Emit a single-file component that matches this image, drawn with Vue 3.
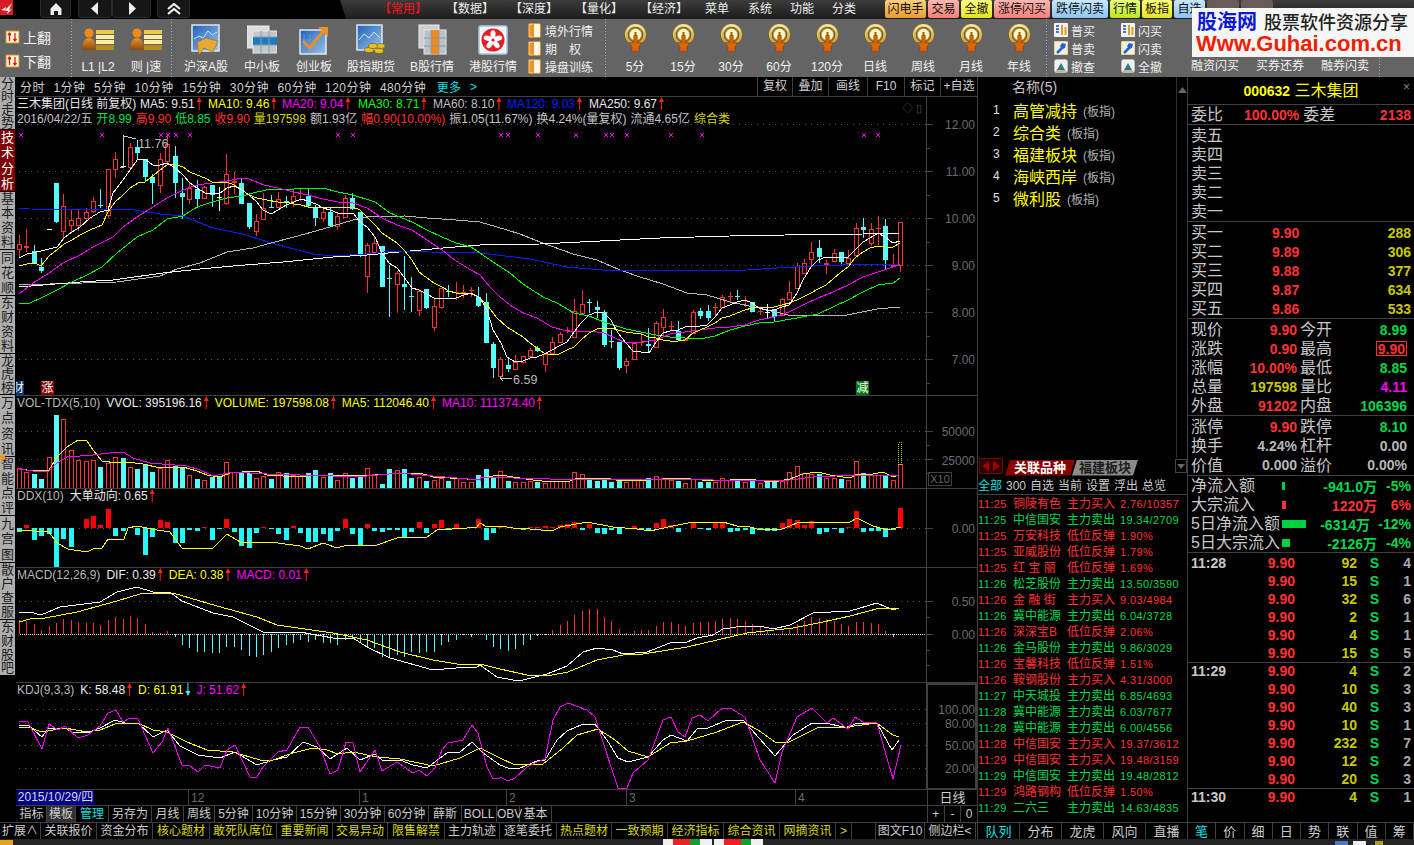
<template>
  <div class="terminal">
    <svg class="sprite" width="0" height="0">
      <defs>
        <linearGradient id="tile" x1="0" y1="0" x2="1" y2="1"><stop offset="0" stop-color="#1f5fb8" /><stop offset="1" stop-color="#9cc4ec" /></linearGradient>
        <linearGradient id="gold" x1="0" y1="0" x2="0" y2="1"><stop offset="0" stop-color="#ffe680" /><stop offset="1" stop-color="#d89a10" /></linearGradient>
        <linearGradient id="pers" x1="0" y1="0" x2="0" y2="1"><stop offset="0" stop-color="#f09020" /><stop offset="1" stop-color="#8a4a10" /></linearGradient>
      </defs>
      <symbol id="ic-page" viewBox="0 0 14 14">
        <rect x="0.500" y="1" width="13" height="12" fill="#fff4d0" stroke="#c89030" />
        <path d="M4 3v8M2.500 5 4 3l1.500 2M9.500 11V3M8 9l1.500 2L11 9" fill="none" stroke="#d02010" stroke-width="1.300" />
      </symbol>
      <symbol id="ic-user" viewBox="0 0 32 24">
        <circle cx="7" cy="6" r="4.500" fill="#f08a1c" />
        <path d="M0 23c0-8 3-12 7-12s7 4 7 12z" fill="url(#pers)" />
        <rect x="14" y="3" width="18" height="4" fill="#e8c850" /><rect x="14" y="8" width="18" height="4" fill="#fff0a0" /><rect x="14" y="13" width="18" height="4" fill="#fff0a0" /><rect x="14" y="18" width="18" height="5" fill="#b88a20" />
      </symbol>
      <symbol id="ic-a" viewBox="0 0 30 32">
        <rect x="1" y="1" width="27" height="26" fill="url(#tile)" stroke="#dfe8f0" stroke-width="1.500" />
        <path d="M3 15l5-3 4 2 5-7 4 4 5-3" fill="none" stroke="#cfe6ff" />
        <path d="M6 18l9-4 12 3-5 11-9-4-5 7z" fill="#e8a838" stroke="#8a5a10" stroke-width="0.500" />
      </symbol>
      <symbol id="ic-mid" viewBox="0 0 30 32">
        <rect x="0" y="2" width="22" height="22" fill="#d8dde2" stroke="#f0f0f0" />
        <rect x="6" y="7" width="24" height="22" fill="#c0c8cf" stroke="#e8e8e8" />
        <rect x="6" y="13" width="24" height="8" fill="#1c7ac0" />
        <path d="M14 7v22M22 7v22M6 13h24M6 21h24" stroke="#8e99a2" fill="none" />
      </symbol>
      <symbol id="ic-cy" viewBox="0 0 30 32">
        <rect x="1" y="6" width="26" height="24" fill="url(#tile)" stroke="#dfe8f0" stroke-width="1.500" />
        <path d="M5 10v17M11 10v17M17 10v17M23 10v17M3 16h22M3 22h22" stroke="#6ea4dc" fill="none" stroke-width="0.600" />
        <path d="M4 17l7 7L25 6" fill="none" stroke="#f09020" stroke-width="3" />
        <path d="M19 3h10v10z" fill="#f09020" />
      </symbol>
      <symbol id="ic-fut" viewBox="0 0 30 32">
        <rect x="1" y="1" width="25" height="25" fill="url(#tile)" stroke="#dfe8f0" stroke-width="1.500" />
        <path d="M3 16l5-6 5 4 5-6 6 6" fill="none" stroke="#d0e8ff" />
        <g fill="#e8c020" stroke="#6a5010" stroke-width="0.600">
          <ellipse cx="13" cy="26" rx="4.500" ry="2.500" /><ellipse cx="23" cy="27" rx="4.500" ry="2.500" /><ellipse cx="17" cy="22" rx="4.500" ry="2.500" /><ellipse cx="25" cy="22" rx="4" ry="2.500" />
        </g>
      </symbol>
      <symbol id="ic-b" viewBox="0 0 30 32">
        <rect x="2" y="1" width="20" height="23" fill="#c8ced4" stroke="#eee" />
        <rect x="7" y="6" width="22" height="24" fill="#b8c0c8" stroke="#e8e8e8" />
        <rect x="14" y="6" width="8" height="24" fill="#f08a1c" />
        <path d="M14 6v24M22 6v24M7 14h22M7 22h22" stroke="#8e99a2" fill="none" />
      </symbol>
      <symbol id="ic-hk" viewBox="0 0 30 30">
        <rect x="1" y="1" width="28" height="28" rx="2" fill="#f4f8fc" stroke="#a8c8e0" stroke-width="1.500" />
        <circle cx="15" cy="15" r="11.500" fill="#e81c24" />
        <g fill="#fff">
          <ellipse cx="15" cy="9.500" rx="2.600" ry="4.200" /><ellipse cx="15" cy="9.500" rx="2.600" ry="4.200" transform="rotate(72 15 15)" /><ellipse cx="15" cy="9.500" rx="2.600" ry="4.200" transform="rotate(144 15 15)" /><ellipse cx="15" cy="9.500" rx="2.600" ry="4.200" transform="rotate(216 15 15)" /><ellipse cx="15" cy="9.500" rx="2.600" ry="4.200" transform="rotate(288 15 15)" />
        </g>
      </symbol>
      <symbol id="ic-note" viewBox="0 0 14 16">
        <rect x="0.500" y="0.500" width="13" height="15" rx="1.500" fill="#fff8e0" stroke="#c89030" />
        <rect x="1.500" y="1.500" width="4" height="13" fill="#f09020" />
        <path d="M3.500 4h.1M3.500 8h.1M3.500 12h.1" stroke="#fff" stroke-width="1.500" />
        <path d="M6 1v14" stroke="#c89030" />
      </symbol>
      <symbol id="ic-gold" viewBox="0 0 26 34">
        <circle cx="13" cy="12" r="10.500" fill="none" stroke="url(#gold)" stroke-width="3" />
        <circle cx="13" cy="12" r="7" fill="#fff6c0" stroke="#c89020" />
        <path d="M13 6.500v.1M13 9v7" stroke="#8a5a10" stroke-width="2.200" />
        <path d="M11 13h4v8h5l-3 5v5H9v-5l-3-5h5z" fill="#d8660c" stroke="#8a3a08" stroke-width="0.600" />
      </symbol>
      <symbol id="ic-buy" viewBox="0 0 14 14">
        <rect x="0" y="0" width="14" height="14" rx="1" fill="#f4f4f4" />
        <path d="M2 3h3M2 6h3M2 9h3" stroke="#1840c0" stroke-width="1.500" />
        <path d="M7 2h2v10H7zM10.500 4h2v8h-2z" fill="#e89a20" />
      </symbol>
      <symbol id="ic-sell" viewBox="0 0 14 14">
        <rect x="0" y="0" width="14" height="14" rx="1" fill="#f4f0d8" stroke="#c89030" stroke-width="0.600" />
        <path d="M3 12l6-6" stroke="#2060e0" stroke-width="2.500" />
        <path d="M8 2l4 1-1 4-3 1-2-3z" fill="#2060e0" />
      </symbol>
      <symbol id="ic-cancel" viewBox="0 0 14 14">
        <rect x="0.500" y="0.500" width="13" height="13" rx="2" fill="#f0f0f0" stroke="#bbb" />
        <path d="M3 11l4-7 4 7z" fill="#2a7a8a" />
        <path d="M2 12h10" stroke="#a08030" />
      </symbol>
    </svg>

    <header class="topbar">
      <div class="top-left">
        <svg class="logo" viewBox="0 0 13 15"><rect width="13" height="15" fill="#d81c24" /><path d="M1 10l5-3-1 3 7-7-3 7 3-1-5 5 1-3z" fill="#f4f4f4" /></svg>
        <div class="nav-btn home"><svg width="12" height="12" viewBox="0 0 12 12"><path d="M6 0l5.500 5.500V12H8V8H4v4H.500V5.500z" fill="#eee" /></svg></div>
        <div class="nav-btn back"><svg width="8" height="13" viewBox="0 0 8 13"><path d="M7 0v13L0 6.500z" fill="#eee" /></svg></div>
        <div class="nav-btn fwd"><svg width="8" height="13" viewBox="0 0 8 13"><path d="M1 0v13l7-6.500z" fill="#eee" /></svg></div>
        <div class="nav-btn top-btn"><svg width="14" height="12" viewBox="0 0 14 12"><path d="M1 6l6-5 6 5M1 11l6-5 6 5" fill="none" stroke="#eee" stroke-width="2.200" /></svg></div>
      </div>
      <nav class="menu">
        <span v-for="m in menus" :key="m.label" class="menu-item" :class="{ on: m.on }" :style="{ left: m.x + 'px' }">{{ m.label }}</span>
      </nav>
      <div class="quick">
        <span v-for="q in quicks" :key="q.label" class="quick-btn" :class="q.cls" :style="{ width: q.w + 'px' }">{{ q.label }}</span>
        <span class="quick-btn q-fade"></span><span class="quick-btn q-fade"></span>
      </div>
    </header>

    <section class="toolbar">
      <div class="tb-group g-page">
        <div class="page-item"><svg width="15" height="14"><use href="#ic-page" /></svg>上翻</div>
        <div class="page-item"><svg width="15" height="14"><use href="#ic-page" /></svg>下翻</div>
      </div>
      <div class="tb-group g-user">
        <div v-for="u in ['L1 |L2', '则 |速']" :key="u" class="tool"><svg class="user-ic" width="32" height="24"><use href="#ic-user" /></svg><span>{{ u }}</span></div>
      </div>
      <div class="tb-group g-mark">
        <div v-for="t in marketTools" :key="t.label" class="tool" :style="{ width: t.w + 'px' }">
          <svg class="mark-ic" width="30" height="32"><use :href="'#' + t.icon" /></svg><span>{{ t.label }}</span>
        </div>
        <div class="tool-list">
          <div v-for="n in ['境外行情', '期　权', '操盘训练']" :key="n"><svg width="13" height="15"><use href="#ic-note" /></svg>{{ n }}</div>
        </div>
      </div>
      <div class="tb-group g-per">
        <div v-for="p in periodTools" :key="p" class="tool per"><svg class="gold-ic" width="23" height="30"><use href="#ic-gold" /></svg><span>{{ p }}</span></div>
      </div>
      <div class="tb-group g-trade">
        <div v-for="t in tradeTools" :key="t.label" class="trade-item"><svg width="14" height="14"><use :href="'#' + t.icon" /></svg>{{ t.label }}</div>
      </div>
      <div class="tb-group g-margin">
        <span v-for="m in ['融资闪买', '买券还券', '融券闪卖']" :key="m">{{ m }}</span>
      </div>
    </section>
    <div class="watermark">
      <div class="wm-top"><b>股海网</b><span>股票软件资源分享</span></div>
      <div class="wm-url">Www.Guhai.com.cn</div>
    </div>

    <div class="body">
      <div class="left-wrap">
        <div class="left-top">
          <aside class="side">
            <div v-for="s in sideTabs" :key="s.label" class="side-tab" :class="{ on: s.on }" :style="{ height: s.h + 'px', lineHeight: (s.h - 1) / s.label.length + 'px' }">
              <span v-for="ch in s.label" :key="ch">{{ ch }}</span>
            </div>
            <i class="side-dot"></i>
          </aside>

          <main class="center">
            <div class="periods">
              <span v-for="p in periods" :key="p">{{ p }}</span>
              <span class="more">更多</span><span class="more more-arrow">&gt;</span>
              <div class="period-actions"><span v-for="a in periodActions" :key="a[0]" :style="{ width: a[1] + 'px' }">{{ a[0] }}</span></div>
            </div>

            <div class="chart">
              <svg class="canvas" width="962" height="692" viewBox="16 97 962 692" shape-rendering="crispEdges">
                <g fill="none" stroke="#585858" stroke-dasharray="1 5">
                  <line v-for="y in gridY" :key="y" x1="19" :y1="y + 0.5" x2="926" :y2="y + 0.5" />
                </g>
                <line x1="20" y1="634.500" x2="926" y2="634.500" stroke="#e0e0e0" stroke-dasharray="1 1" />
                <g stroke="#444">
                  <line x1="926.500" y1="97" x2="926.500" y2="789" />
                  <line v-for="t in axisTicks" :key="t.y" :x1="927" :y1="t.y + 0.5" :x2="t.major ? 933 : 930" :y2="t.y + 0.5" />
                </g>
                <text v-for="t in axisLabels" :key="t.label + t.y" class="axis-label" x="975" :y="t.y" text-anchor="end">{{ t.label }}</text>

                <g stroke="#ff00ff" fill="none">
                  <path v-for="m in markers" :key="m" :d="`M${m - 2} 133l4 4M${m + 2} 133l-4 4`" />
                </g>

                <!-- K线 -->
                <g v-for="c in candles" :key="c.i">
                  <line :x1="c.x + 0.5" :y1="c.high" :x2="c.x + 0.5" :y2="c.low" :stroke="c.color" />
                  <rect :x="c.x - 2 + (c.hollow ? 0.5 : 0)" :y="c.top + (c.hollow ? 0.5 : 0)" :width="c.hollow ? 4 : 5" :height="c.h" :fill="c.hollow ? '#000' : c.color" :stroke="c.hollow ? c.color : 'none'" />
                </g>
                <g fill="none">
                  <polyline v-for="l in maLines" :key="l.color + l.id" :points="l.points" :stroke="l.color" />
                </g>
                <g fill="none" stroke="#c8c8c8">
                  <path d="M123.500 136v31M120 167h4M124 136l12 3" />
                  <path d="M512 378h-12M503 375l-3 3 3 3" />
                </g>
                <text class="mark-text" x="138" y="148">11.76</text>
                <text class="mark-text" x="513" y="384">6.59</text>
                <!-- 量 -->
                <g v-for="b in volBars" :key="b.i">
                  <rect v-if="b.up" :x="b.x - 1.5" :y="b.top + 0.5" width="4" :height="488 - b.top" fill="#000" stroke="#ff3232" />
                  <rect v-else :x="b.x - 2" :y="b.top" width="5" :height="488 - b.top" fill="#54fcfc" />
                </g>
                <rect x="898.500" y="442.500" width="3" height="22" fill="none" stroke="#c8c800" stroke-dasharray="1 1" />
                <polyline :points="volMa5" fill="none" stroke="#ffff00" />
                <polyline :points="volMa10" fill="none" stroke="#ff00ff" />
                <!-- DDX -->
                <rect v-for="b in ddxBars" :key="b.i" :x="b.x - 2" :y="b.y" width="5" :height="b.h" :fill="b.color" />
                <polyline :points="ddxLine" fill="none" stroke="#ffff00" />
                <!-- MACD -->
                <line v-for="b in macdBars" :key="b.i" :x1="b.x + 0.5" y1="634" :x2="b.x + 0.5" :y2="b.y" :stroke="b.color" />
                <polyline :points="dif" fill="none" stroke="#ffffff" />
                <polyline :points="dea" fill="none" stroke="#ffff00" />
                <!-- KDJ -->
                <polyline :points="kLine" fill="none" stroke="#ffffff" />
                <polyline :points="dLine" fill="none" stroke="#ffff00" />
                <polyline :points="jLine" fill="none" stroke="#ff00ff" />
              </svg>

              <div class="pane price">
                <div class="legend lg-price">
                  <span class="title">三木集团(日线 前复权)</span>
                  <span v-for="m in maLegend" :key="m.label" :style="{ color: m.color, width: m.w + 'px' }" class="ma">{{ m.label }}<i class="up"></i></span>
                </div>
                <div class="legend info">
                  <span v-for="d in dayInfo" :key="d.t" :class="d.c">{{ d.t }}</span>
                </div>
                <span class="flag f-cai">财</span><span class="flag f-zhang">涨</span><span class="flag f-jian">减</span>
                <span class="tiny-icons">◇ ▯</span>
              </div>
              <div class="pane vol">
                <div class="legend">
                  <span class="name">VOL-TDX(5,10)</span>
                  <span class="w">VVOL: 395196.16<i class="up"></i></span>
                  <span class="y">VOLUME: 197598.08<i class="up"></i></span>
                  <span class="y">MA5: 112046.40<i class="up"></i></span>
                  <span class="m">MA10: 111374.40<i class="up"></i></span>
                </div>
                <span class="x10">X10</span>
              </div>
              <div class="pane ddx">
                <div class="legend">
                  <span class="name">DDX(10)</span>
                  <span class="w">大单动向: 0.65<i class="up"></i></span>
                </div>
              </div>
              <div class="pane macd">
                <div class="legend">
                  <span class="name">MACD(12,26,9)</span>
                  <span class="w">DIF: 0.39<i class="up"></i></span>
                  <span class="y">DEA: 0.38<i class="up"></i></span>
                  <span class="m">MACD: 0.01<i class="up"></i></span>
                </div>
              </div>
              <div class="pane kdj">
                <div class="legend">
                  <span class="name">KDJ(9,3,3)</span>
                  <span class="w">K: 58.48<i class="up"></i></span>
                  <span class="y">D: 61.91<i class="down"></i></span>
                  <span class="m">J: 51.62<i class="up"></i></span>
                </div>
                <div class="kdj-box"></div>
              </div>
            </div>

            <div class="timeaxis">
              <span class="date">2015/10/29/四</span>
              <span v-for="t in timeMarks" :key="t.label" class="month" :style="{ left: t.x + 'px' }">{{ t.label }}</span>
              <span class="axis-mode">日线</span>
            </div>

            <div class="ind-tabs">
              <span v-for="t in indTabs" :key="t.label" :class="t.cls" :style="{ width: t.w + 'px' }">{{ t.label }}</span>
              <div class="zoom-btns"><span>+</span><span>-</span><span>0</span></div>
            </div>
          </main>
        </div>
        <footer class="ext-tabs">
          <span v-for="e in extTabs" :key="e.label" :class="{ hot: e.hot }" :style="{ width: e.w + 'px' }">{{ e.label }}</span>
        </footer>
      </div>

      <section class="relate">
        <div class="rel-top">
          <div class="rel-head">名称(5)</div>
          <div v-for="(b, i) in blocks" :key="b" class="rel-row"><em>{{ i + 1 }}</em><b>{{ b }}</b><small>(板指)</small></div>
          <div class="scroll"><svg width="9" height="6" viewBox="0 0 9 6"><path d="M4.500 0L9 6H0z" fill="#666" /></svg></div>
        </div>
        <div class="rel-tabs">
          <div class="arrows"><svg width="24" height="16" viewBox="0 0 24 16"><rect x="0.500" y="0.500" width="23" height="15" fill="#2a0000" stroke="#700" /><path d="M10 3v10L3 8zM14 3v10l7-5z" fill="#a00000" /></svg></div>
          <span class="rt-on">关联品种</span><span class="rt-off">福建板块</span>
          <div class="rt-drop"><svg width="8" height="5" viewBox="0 0 8 5"><path d="M0 0h8L4 5z" fill="#666" /></svg></div>
        </div>
        <div class="rel-filter"><span class="on">全部</span><span>300</span><span>自选</span><span>当前</span><span>设置</span><span>浮出</span><span>总览</span></div>
        <div class="rel-list">
          <div v-for="r in tape" :key="r.t + r.n + r.v" class="tape-row" :class="r.up ? 'red' : 'green'">
            <span class="t">{{ r.t }}</span><span class="n">{{ r.n }}</span><span class="a">{{ r.a }}</span><span class="v">{{ r.v }}</span>
          </div>
        </div>
        <div class="bottom-tabs rel-bottom"><span v-for="(t, i) in relTabs" :key="t" :class="{ on: i === 0 }">{{ t }}</span></div>
      </section>

      <section class="quote">
        <div class="q-title"><b>000632</b> 三木集团<span class="close">×</span></div>
        <div class="q-ratio">
          <span class="lb">委比</span><span class="rv">100.00%</span><span class="lb lb2">委差</span><span class="rv end">2138</span>
        </div>
        <div class="q-book">
          <div v-for="s in asks" :key="s" class="q-level"><span class="lb">{{ s }}</span></div>
        </div>
        <div class="q-book">
          <div v-for="b in bids" :key="b[0]" class="q-level"><span class="lb">{{ b[0] }}</span><span class="rv price-cell">{{ b[1] }}</span><span class="yv">{{ b[2] }}</span></div>
        </div>
        <div class="q-stats s1">
          <div v-for="s in stats1" :key="s[0]" class="stat"><span class="lb">{{ s[0] }}</span><span :class="[s[2], { boxed: s[3] }]">{{ s[1] }}</span></div>
        </div>
        <div class="q-stats s2">
          <div v-for="s in stats2" :key="s[0]" class="stat"><span class="lb">{{ s[0] }}</span><span :class="s[2]">{{ s[1] }}</span></div>
        </div>
        <div class="q-flow">
          <div v-for="f in flows" :key="f.label" class="flow-row">
            <span class="lb flow-lb">{{ f.label }}</span>
            <span class="flow-bar"><i :style="{ width: f.bar + 'px', background: f.up ? '#ff3232' : '#00d040' }"></i></span>
            <span class="flow-val" :class="[f.up ? 'rv' : 'gv', { wide: f.wide }]">{{ f.val }}</span><span class="flow-pct" :class="f.up ? 'rv' : 'gv'">{{ f.pct }}</span>
          </div>
        </div>
        <div class="trades">
          <div v-for="g in trades" :key="g.time" class="trade-group">
            <div v-for="(r, i) in g.rows" :key="i" class="trade-row">
              <span class="tt">{{ i === 0 ? g.time : '' }}</span><span class="rv tp">9.90</span><span class="yv tv">{{ r[0] }}</span><span class="gv ts">S</span><span class="tc">{{ r[1] }}</span>
            </div>
          </div>
        </div>
        <div class="bottom-tabs q-bottom"><span v-for="(t, i) in quoteTabs" :key="t" :class="{ on: i === 0 }">{{ t }}</span></div>
      </section>
    </div>

    <div class="status">
      <i class="st-flag"></i><i class="st-box st-a"></i><i class="st-box st-b"></i><i class="st-tray"></i>
    </div>
  </div>
</template>

<script setup>
const menus = [
  { label: '【常用】', x: 39, on: true }, { label: '【数据】', x: 106 }, { label: '【深度】', x: 170 }, { label: '【量化】', x: 235 }, { label: '【经济】', x: 300 },
  { label: '菜单', x: 365 }, { label: '系统', x: 408 }, { label: '功能', x: 450 }, { label: '分类', x: 492 },
]
const quicks = [
  { label: '闪电手', w: 41, cls: 'q-orange' }, { label: '交易', w: 31, cls: 'q-pink' }, { label: '全撤', w: 31, cls: 'q-yellow' },
  { label: '涨停闪买', w: 56, cls: 'q-pink' }, { label: '跌停闪卖', w: 56, cls: 'q-blue' }, { label: '行情', w: 30, cls: 'q-lime' },
  { label: '板指', w: 30, cls: 'q-yellow' }, { label: '自选', w: 31, cls: 'q-blue' },
]
const marketTools = [
  { label: '沪深A股', icon: 'ic-a', w: 60 }, { label: '中小板', icon: 'ic-mid', w: 52 }, { label: '创业板', icon: 'ic-cy', w: 52 },
  { label: '股指期货', icon: 'ic-fut', w: 62 }, { label: 'B股行情', icon: 'ic-b', w: 60 }, { label: '港股行情', icon: 'ic-hk', w: 62 },
]
const periodTools = ['5分', '15分', '30分', '60分', '120分', '日线', '周线', '月线', '年线']
const tradeTools = [
  { label: '普买', icon: 'ic-buy' }, { label: '闪买', icon: 'ic-buy' }, { label: '普卖', icon: 'ic-sell' },
  { label: '闪卖', icon: 'ic-sell' }, { label: '撤查', icon: 'ic-cancel' }, { label: '全撤', icon: 'ic-cancel' },
]
const sideTabs = [
  { label: '分时走势', h: 53 }, { label: '技术分析', h: 62, on: true }, { label: '基本资料', h: 58 }, { label: '同花顺', h: 46 }, { label: '东财资料', h: 58 },
  { label: '龙虎榜', h: 41 }, { label: '万点资讯', h: 62 }, { label: '智能点评', h: 59 }, { label: '九宫图', h: 47 }, { label: '散户查服', h: 57 }, { label: '东财股吧', h: 56 },
]
const periods = ['分时', '1分钟', '5分钟', '10分钟', '15分钟', '30分钟', '60分钟', '120分钟', '480分钟']
const periodActions = [['复权', 35], ['叠加', 36], ['画线', 39], ['F10', 37], ['标记', 36], ['+自选', 37]]
const maLegend = [
  { label: 'MA5: 9.51', color: '#e8e8e8', w: 68 }, { label: 'MA10: 9.46', color: '#ffff00', w: 74 }, { label: 'MA20: 9.04', color: '#ff00ff', w: 76 },
  { label: 'MA30: 8.71', color: '#00ff00', w: 75 }, { label: 'MA60: 8.10', color: '#c0c0c0', w: 74 }, { label: 'MA120: 9.03', color: '#0020ff', w: 82 }, { label: 'MA250: 9.67', color: '#e8e8e8', w: 80 },
]
const dayInfo = [
  { t: '2016/04/22/五', c: 'g' }, { t: '开8.99', c: 'gr' }, { t: '高9.90', c: 'r' }, { t: '低8.85', c: 'gr' }, { t: '收9.90', c: 'r' },
  { t: '量197598', c: 'yd' }, { t: '额1.93亿', c: 'g' }, { t: '幅0.90(10.00%)', c: 'r' }, { t: '振1.05(11.67%)', c: 'g' },
  { t: '换4.24%(量复权)', c: 'g' }, { t: '流通4.65亿', c: 'g' }, { t: '综合类', c: 'yd' },
]
const timeMarks = [{ label: '12', x: 172 }, { label: '1', x: 343 }, { label: '2', x: 490 }, { label: '3', x: 610 }, { label: '4', x: 779 }]
const indTabs = [
  { label: '指标', w: 30 }, { label: '模板', w: 29, cls: 'tab-on' }, { label: '管理', w: 33, cls: 'tab-cy' }, { label: '另存为', w: 43 }, { label: '月线', w: 32 }, { label: '周线', w: 31 },
  { label: '5分钟', w: 38 }, { label: '10分钟', w: 44 }, { label: '15分钟', w: 44 }, { label: '30分钟', w: 44 }, { label: '60分钟', w: 44 },
  { label: '薛斯', w: 33 }, { label: 'BOLL', w: 35 }, { label: 'OBV', w: 23 }, { label: '基本', w: 32 },
]
const extTabs = [
  { label: '扩展∧', w: 41 }, { label: '关联报价', w: 56 }, { label: '资金分布', w: 56 }, { label: '核心题材', w: 57, hot: 1 }, { label: '敢死队席位', w: 67, hot: 1 },
  { label: '重要新闻', w: 56, hot: 1 }, { label: '交易异动', w: 55, hot: 1 }, { label: '限售解禁', w: 57, hot: 1 }, { label: '主力轨迹', w: 55 }, { label: '逐笔委托', w: 57 },
  { label: '热点题材', w: 55, hot: 1 }, { label: '一致预期', w: 56, hot: 1 }, { label: '经济指标', w: 56, hot: 1 }, { label: '综合资讯', w: 56, hot: 1 }, { label: '网摘资讯', w: 56, hot: 1 },
  { label: '>', w: 16, hot: 1 }, { label: '', w: 24 }, { label: '图文F10', w: 49 }, { label: '侧边栏<', w: 51 },
]
const blocks = ['高管减持', '综合类', '福建板块', '海峡西岸', '微利股']
const relTabs = ['队列', '分布', '龙虎', '风向', '直播']
const quoteTabs = ['笔', '价', '细', '日', '势', '联', '值', '筹']
const tape = [
  ['11:25', '铜陵有色', '主力买入', '2.76/10357', 1], ['11:25', '中信国安', '主力卖出', '19.34/2709', 0], ['11:25', '万安科技', '低位反弹', '1.90%', 1], ['11:25', '亚威股份', '低位反弹', '1.79%', 1],
  ['11:25', '红 宝 丽', '低位反弹', '1.69%', 1], ['11:26', '松芝股份', '主力卖出', '13.50/3590', 0], ['11:26', '金 融 街', '主力买入', '9.03/4984', 1], ['11:26', '冀中能源', '主力卖出', '6.04/3728', 0],
  ['11:26', '深深宝B', '低位反弹', '2.06%', 1], ['11:26', '金马股份', '主力卖出', '9.86/3029', 0], ['11:26', '宝馨科技', '低位反弹', '1.51%', 1], ['11:26', '鞍钢股份', '主力买入', '4.31/3000', 1],
  ['11:27', '中天城投', '主力卖出', '6.85/4693', 0], ['11:28', '冀中能源', '主力卖出', '6.03/7677', 0], ['11:28', '冀中能源', '主力卖出', '6.00/4556', 0], ['11:28', '中信国安', '主力买入', '19.37/3612', 1],
  ['11:29', '中信国安', '主力买入', '19.48/3159', 1], ['11:29', '中信国安', '主力卖出', '19.48/2812', 0], ['11:29', '鸿路钢构', '低位反弹', '1.50%', 1], ['11:29', '二六三', '主力卖出', '14.63/4835', 0],
].map(([t, n, a, v, up]) => ({ t, n, a, v, up }))
const asks = ['卖五', '卖四', '卖三', '卖二', '卖一']
const bids = [['买一', '9.90', '288'], ['买二', '9.89', '306'], ['买三', '9.88', '377'], ['买四', '9.87', '634'], ['买五', '9.86', '533']]
const stats1 = [
  ['现价', '9.90', 'rv'], ['今开', '8.99', 'gv'], ['涨跌', '0.90', 'rv'], ['最高', '9.90', 'rv', true], ['涨幅', '10.00%', 'rv'], ['最低', '8.85', 'gv'],
  ['总量', '197598', 'yv'], ['量比', '4.11', 'mv'], ['外盘', '91202', 'rv'], ['内盘', '106396', 'gv'],
]
const stats2 = [['涨停', '9.90', 'rv'], ['跌停', '8.10', 'gv'], ['换手', '4.24%', 'wv'], ['杠杆', '0.00', 'wv'], ['价值', '0.000', 'wv'], ['溢价', '0.00%', 'wv']]
const flows = [
  { label: '净流入额', bar: 3, val: '-941.0万', pct: '-5%' }, { label: '大宗流入', bar: 4, val: '1220万', pct: '6%', up: true },
  { label: '5日净流入额', bar: 24, val: '-6314万', pct: '-12%', wide: true }, { label: '5日大宗流入', bar: 8, val: '-2126万', pct: '-4%' },
]
const trades = [
  { time: '11:28', rows: [[92, 4], [15, 1], [32, 6], [2, 1], [4, 1], [15, 5]] },
  { time: '11:29', rows: [[4, 2], [10, 3], [40, 3], [10, 1], [232, 7], [12, 2], [20, 3]] },
  { time: '11:30', rows: [[4, 1]] },
]

// 图表数据，坐标按像素取
const gridY = [124, 171, 218, 265, 312, 359, 431, 459, 528, 601, 709, 723, 745, 768]
const axisTicks = []
for (let y = 124; y < 390; y += 23.5) axisTicks.push({ y: Math.round(y), major: (y - 124) % 47 === 0 })
for (let y = 431; y < 480; y += 14) axisTicks.push({ y, major: (y - 431) % 28 === 0 })
for (const y of [528, 601, 617, 634, 650, 665]) axisTicks.push({ y, major: y === 528 || y === 601 || y === 634 })
const axisLabels = [
  ['12.00', 129], ['11.00', 176], ['10.00', 223], ['9.00', 270], ['8.00', 317], ['7.00', 364], ['50000', 436], ['25000', 465], ['0.00', 533],
  ['0.50', 606], ['0.00', 639], ['100.00', 714], ['80.00', 728], ['50.00', 750], ['20.00', 773],
].map(([label, y]) => ({ label, y }))
const markers = [21, 102, 161, 168, 176, 190, 338, 353, 501, 508, 538, 576, 606, 612, 627, 671, 702, 864, 878]

const barX = (i) => Math.round(19 + 7.405 * i)
const zy = (v) => Math.round(130 + v / 3)
const RED = '#ff3232'
const CYAN = '#54fcfc'
const colors = { r: RED, c: CYAN, w: '#ffffff' }
// 每根：实体上、实体下、最高、最低、颜色（放大图坐标）
const rawCandles = [
  [343, 358, 315, 385, 'r'], [349, 354, 297, 365, 'r'], [363, 402, 345, 402, 'c'], [411, 423, 385, 430, 'c'], [297, 299, 297, 299, 'w'], [160, 276, 160, 278, 'c'],
  [229, 302, 192, 330, 'r'], [271, 285, 240, 310, 'r'], [265, 285, 240, 302, 'r'], [247, 265, 235, 270, 'r'], [213, 242, 200, 250, 'r'], [225, 228, 178, 235, 'c'],
  [118, 255, 118, 265, 'r'], [88, 118, 67, 143, 'r'], [109, 111, 15, 111, 'w'], [52, 112, 40, 118, 'r'], [52, 68, 30, 90, 'c'], [88, 140, 88, 155, 'c'],
  [140, 158, 133, 222, 'c'], [88, 165, 70, 188, 'r'], [43, 92, 18, 105, 'r'], [78, 158, 48, 205, 'c'], [190, 200, 145, 268, 'c'], [175, 208, 160, 222, 'r'],
  [178, 208, 150, 235, 'c'], [170, 205, 168, 207, 'r'], [165, 195, 165, 232, 'c'], [201, 203, 170, 242, 'w'], [133, 220, 72, 225, 'r'], [152, 158, 126, 192, 'r'],
  [160, 222, 145, 222, 'c'], [220, 290, 220, 298, 'c'], [272, 302, 252, 318, 'r'], [235, 268, 190, 268, 'r'], [230, 232, 195, 235, 'c'], [207, 230, 185, 235, 'r'],
  [212, 218, 198, 235, 'c'], [198, 213, 178, 232, 'r'], [190, 193, 178, 212, 'r'], [197, 228, 175, 230, 'c'], [235, 263, 225, 288, 'c'], [246, 263, 230, 275, 'r'],
  [246, 289, 235, 292, 'c'], [258, 287, 250, 300, 'r'], [205, 260, 195, 265, 'r'], [205, 238, 190, 240, 'c'], [245, 378, 245, 380, 'c'], [345, 437, 338, 488, 'r'],
  [340, 365, 322, 370, 'r'], [348, 470, 348, 472, 'c'], [443, 445, 405, 560, 'c'], [430, 463, 422, 545, 'r'], [462, 472, 378, 540, 'c'], [498, 502, 440, 545, 'c'],
  [483, 540, 480, 557, 'r'], [478, 534, 478, 536, 'c'], [528, 590, 505, 602, 'r'], [475, 530, 475, 537, 'r'], [482, 487, 465, 500, 'c'], [486, 489, 455, 510, 'r'],
  [487, 490, 465, 505, 'r'], [481, 484, 470, 500, 'r'], [500, 527, 470, 530, 'c'], [515, 640, 490, 640, 'c'], [642, 715, 635, 743, 'c'], [686, 737, 680, 745, 'r'],
  [705, 717, 688, 725, 'c'], [695, 718, 675, 718, 'r'], [677, 695, 677, 695, 'r'], [661, 677, 655, 680, 'r'], [654, 662, 648, 665, 'c'], [672, 703, 672, 725, 'r'],
  [635, 668, 622, 670, 'r'], [613, 635, 605, 640, 'r'], [601, 604, 590, 610, 'r'], [542, 620, 508, 622, 'r'], [522, 548, 480, 550, 'r'], [515, 518, 508, 548, 'c'],
  [532, 540, 513, 565, 'c'], [547, 645, 540, 650, 'c'], [632, 634, 600, 655, 'c'], [636, 715, 636, 720, 'c'], [692, 705, 685, 728, 'r'], [638, 688, 638, 688, 'r'],
  [636, 639, 610, 648, 'r'], [643, 648, 595, 670, 'c'], [580, 650, 572, 650, 'r'], [562, 590, 537, 618, 'r'], [589, 592, 573, 600, 'r'], [603, 630, 573, 632, 'c'],
  [628, 632, 628, 632, 'r'], [547, 608, 540, 608, 'r'], [543, 557, 535, 567, 'c'], [544, 565, 525, 572, 'c'], [531, 534, 520, 560, 'r'], [502, 532, 495, 532, 'r'],
  [497, 502, 487, 517, 'r'], [498, 502, 480, 510, 'c'], [509, 512, 498, 530, 'r'], [515, 545, 515, 547, 'c'], [544, 547, 533, 555, 'r'], [547, 549, 522, 565, 'w'],
  [538, 560, 538, 572, 'c'], [508, 555, 503, 558, 'r'], [487, 507, 453, 507, 'r'], [407, 475, 398, 477, 'r'], [398, 428, 388, 428, 'r'], [365, 388, 336, 408, 'r'],
  [355, 382, 330, 400, 'c'], [400, 405, 390, 432, 'r'], [368, 392, 358, 392, 'r'], [367, 395, 367, 405, 'c'], [385, 398, 360, 398, 'r'], [293, 375, 280, 375, 'r'],
  [292, 300, 265, 325, 'c'], [298, 338, 280, 348, 'r'], [293, 297, 258, 345, 'r'], [288, 390, 268, 418, 'c'], [405, 410, 373, 412, 'r'], [277, 405, 277, 425, 'r'],
]
const candles = rawCandles.map(([t, b, hi, lo, k], i) => {
  const top = zy(t)
  const h = Math.max(zy(b) - top, 1)
  return { i, x: barX(i), top, h, high: zy(hi), low: zy(lo), color: colors[k], hollow: k === 'r' && h > 2 }
})

const volRaw = [218,232,-237,-252,187,-60,72,165,195,198,195,-215,205,187,-188,217,-222,-208,-230,218,195,-212,-218,240,-252,255,-245,-245,202,232,-232,-235,250,243,-252,232,-235,240,242,-235,-225,245,-235,255,235,-248,-245,220,238,-267,-222,226,-222,-248,245,-258,255,250,-258,250,260,260,-240,-222,-250,228,-258,260,260,258,-260,265,258,258,258,232,238,-255,-258,-250,-260,-255,262,255,252,-250,244,248,255,-258,265,252,-260,-260,260,250,255,-258,262,-258,265,-260,-262,258,232,214,235,238,-238,250,250,-252,255,198,-235,240,240,-240,255,208]
const volBars = volRaw.map((v, i) => ({ i, x: barX(i), up: v > 0, top: Math.round(395 + Math.abs(v) / 3) }))

const ddxRaw = [-412,390,-435,-422,-418,-515,-432,-455,399,372,363,390,342,-423,-408,395,-420,-480,-426,375,380,-443,-443,-405,-408,396,-435,-402,372,-412,-452,-458,-414,396,-402,-417,-435,393,-414,-441,-441,-417,-438,-408,372,-417,-450,387,-408,-411,-405,-405,-426,-411,381,-414,387,375,-404,387,399,399,372,-435,-414,396,397,398,-404,396,396,393,396,391,387,381,-404,387,-413,-418,-404,-416,399,393,-404,-407,384,372,390,-410,399,381,-402,-404,384,384,-410,-407,-404,-418,-404,-407,-407,384,372,376,390,378,-416,-410,-402,-413,396,348,-410,-407,-407,-425,-404,339]
const ddxBars = ddxRaw.map((v, i) => {
  const y = Math.round(395 + Math.abs(v) / 3)
  return v > 0 ? { i, x: barX(i), y, h: 528 - y, color: '#ff0000' } : { i, x: barX(i), y: 528, h: y - 528, color: '#22f8f8' }
})

const macdRaw = [675,678,688,705,692,685,672,675,680,685,685,690,675,667,672,663,670,688,712,714,708,725,750,760,770,770,775,775,755,755,765,782,785,780,770,760,750,745,735,740,735,745,745,750,735,725,740,755,760,785,785,780,785,770,775,770,770,750,740,735,720,725,720,735,757,763,767,762,750,735,722,720,705,690,678,660,648,642,642,666,678,702,714,708,705,705,693,681,681,687,693,684,681,681,678,672,670,672,678,687,696,705,714,708,705,687,678,666,670,672,678,687,693,681,681,684,687,708,725,717]
const macdBars = macdRaw.map((v, i) => ({ i, x: barX(i), y: Math.round(395 + v / 3), color: v < 718 ? RED : CYAN }))

// 放大图里读到的折线点，两段分别是左半和右半
const pts = (oy, ox2, left, right) => {
  const out = []
  for (let i = 0; i < left.length; i += 2) out.push(`${Math.round(left[i] / 3)},${Math.round(oy + left[i + 1] / 3)}`)
  for (let i = 0; i < right.length; i += 2) out.push(`${Math.round(ox2 + right[i] / 3)},${Math.round(oy + right[i + 1] / 3)}`)
  return out.join(' ')
}
const maLines = [
  { id: 60, color: '#b8b8b8', points: pts(130, 480, [57,465,150,463,250,458,350,457,480,437,530,418,600,400,680,365,760,355,814,340,881,322,970,298,1058,270,1102,262,1214,258,1280,263,1369,270,1440,276], [0,276,50,290,120,312,180,335,280,372,350,390,420,420,480,440,550,463,620,488,680,495,750,515,838,535,925,555,1015,558,1100,555,1190,538,1261,532]) },
  { id: 250, color: '#ffffff', points: pts(130, 480, [57,470,240,456,340,451,490,430,600,418,700,408,850,395,1000,380,1100,374,1230,362,1330,355,1440,346], [0,346,180,341,360,332,540,325,750,318,915,315,1150,311,1261,310]) },
  { id: 120, color: '#0020ff', points: pts(130, 480, [57,235,90,236,405,239,480,253,550,258,640,295,730,312,814,340,881,358,940,372,1000,377,1102,373,1180,362,1290,365,1440,370], [0,370,50,375,150,388,260,412,370,420,500,421,610,424,800,421,890,414,1000,408,1160,403,1261,402]) },
  { id: 30, color: '#00ff00', points: pts(130, 480, [57,523,90,518,124,505,170,480,215,455,260,435,305,410,350,370,410,320,458,300,502,268,548,257,592,230,637,215,680,205,725,197,770,187,814,178,881,176,970,175,1013,185,1058,195,1124,217,1170,250,1235,275,1280,300,1325,322,1369,340,1414,352,1440,368], [0,368,40,395,90,430,130,463,190,500,230,520,283,548,327,557,373,575,438,597,484,606,527,615,571,620,616,623,661,628,706,617,749,600,794,588,838,580,882,575,950,565,1015,553,1060,530,1105,510,1150,485,1193,465,1238,458,1261,445]) },
  { id: 20, color: '#ff00ff', points: pts(130, 480, [57,493,100,460,147,430,190,400,240,375,280,350,340,320,370,290,410,260,458,230,500,205,548,180,592,165,637,160,680,152,725,145,748,148,791,165,835,175,881,187,925,195,970,208,1013,215,1058,220,1102,235,1147,265,1192,285,1235,300,1280,330,1325,360,1369,392,1414,420,1440,435], [0,435,30,470,60,500,90,525,130,548,170,565,217,590,261,602,327,603,373,610,438,640,484,635,527,630,571,612,616,607,661,600,706,595,749,592,794,585,838,570,882,560,928,545,970,525,1015,505,1060,485,1105,465,1150,440,1193,425,1238,412,1261,402]) },
  { id: 10, color: '#ffff00', points: pts(130, 480, [57,408,80,402,105,400,124,408,147,378,170,360,193,342,215,330,240,315,270,300,305,285,325,245,345,215,370,195,391,175,414,160,436,155,458,138,481,120,502,105,526,103,548,112,570,125,592,135,614,145,637,157,660,157,680,157,703,165,725,180,748,195,770,205,800,210,835,215,858,216,881,222,903,225,925,230,947,235,970,232,1013,232,1058,232,1081,240,1102,262,1124,285,1147,310,1192,340,1213,360,1235,390,1258,425,1280,445,1303,458,1325,470,1347,483,1369,488,1392,488,1414,492,1436,500], [0,505,20,525,50,565,82,590,106,605,128,620,151,640,172,655,193,668,217,675,238,672,261,660,283,650,304,630,327,610,350,598,373,595,394,593,415,600,438,605,460,608,484,612,506,622,527,625,550,630,571,633,595,632,616,630,638,608,661,600,682,590,706,580,727,565,749,558,772,550,794,540,817,535,838,532,859,532,882,530,905,525,928,520,950,510,970,500,993,488,1015,478,1038,465,1060,448,1081,430,1105,410,1126,385,1150,365,1171,355,1193,349,1216,350,1238,350,1261,338]) },
  { id: 5, color: '#ffffff', points: pts(130, 480, [57,385,80,372,124,362,147,358,170,352,193,325,215,305,240,290,270,265,300,245,325,240,340,190,370,150,391,120,414,88,436,88,458,105,481,105,502,100,526,115,548,135,570,160,592,175,614,190,637,192,660,190,680,175,703,168,725,180,748,195,770,215,790,240,814,252,835,240,858,225,881,215,903,207,925,213,947,222,970,235,991,240,1013,250,1036,248,1058,248,1081,275,1102,290,1124,320,1147,370,1168,400,1192,415,1213,440,1235,475,1258,480,1280,493,1303,505,1325,505,1347,503,1369,505,1392,495,1414,490,1436,500], [0,505,20,540,40,600,62,640,82,680,106,695,128,692,151,685,172,680,193,672,217,660,238,648,261,635,283,605,304,578,327,555,350,547,373,550,394,570,415,610,438,640,460,664,484,665,506,668,527,635,550,610,571,602,595,600,616,590,638,588,661,588,682,585,706,560,727,535,749,525,772,515,794,510,817,520,838,535,859,540,882,540,905,530,928,525,950,490,970,450,993,410,1015,390,1038,382,1060,382,1081,380,1105,380,1126,360,1150,335,1171,325,1193,310,1216,322,1238,338,1261,333]) },
]
const volMa5 = pts(395, 480, [57,222,80,225,100,228,147,225,170,185,200,155,235,135,260,138,280,165,305,198,350,203,380,202,430,208,480,218,550,217,590,228,620,240,660,245,690,235,725,230,770,228,800,240,850,243,925,243,1000,240,1050,243,1125,240,1170,238,1260,235,1300,245,1400,252,1440,252], [0,250,20,247,60,240,100,247,160,255,210,260,270,258,290,250,380,248,420,258,500,255,600,250,700,258,800,253,880,260,930,252,970,238,1015,232,1050,240,1110,250,1130,238,1180,237,1210,232,1240,245,1258,240])
const volMa10 = pts(395, 480, [57,222,100,228,147,228,170,205,200,185,280,180,350,170,370,170,400,190,450,205,560,212,600,225,640,243,700,232,800,238,1000,242,1100,242,1200,235,1300,242,1440,255], [0,250,60,247,100,248,210,253,290,253,400,252,700,254,800,257,930,255,1000,245,1130,240,1258,240])
const ddxLine = pts(395, 480, [50,405,100,408,147,410,170,445,205,462,260,472,285,460,305,460,325,432,372,432,385,400,410,392,470,405,510,412,545,458,640,458,680,418,720,440,750,445,810,440,900,452,925,463,970,445,1010,458,1040,450,1080,453,1130,450,1190,428,1280,427,1310,405,1400,398,1430,395], [0,385,20,395,60,392,100,398,150,402,215,408,240,395,320,382,400,395,470,402,510,407,580,392,640,382,730,380,770,393,810,395,830,403,900,405,950,385,1010,382,1110,380,1130,370,1180,392,1220,405,1262,395])
const dif = pts(395, 480, [57,652,90,652,124,660,180,635,300,620,350,590,410,577,460,590,510,590,545,618,640,655,700,665,790,710,900,710,1000,730,1060,730,1100,755,1170,790,1300,825,1400,815,1430,815], [0,810,50,845,100,856,130,856,200,838,260,812,310,770,350,758,400,765,430,778,500,770,570,743,620,742,650,730,700,720,730,703,790,692,840,693,880,702,930,690,1000,655,1110,647,1190,625,1240,645,1258,640])
const dea = pts(395, 480, [57,682,90,672,135,668,230,650,350,618,420,598,520,595,650,632,770,665,830,690,1000,715,1100,735,1200,770,1300,795,1370,808,1430,808], [0,808,60,822,140,840,200,842,265,830,350,795,430,780,490,777,620,755,800,715,940,700,1030,680,1110,662,1200,640,1258,640])
const kLine = pts(680, 500, [57,135,85,135,125,172,145,148,195,145,215,155,260,160,300,145,345,120,375,130,415,128,460,172,500,150,540,198,595,225,660,235,705,215,770,255,820,240,860,230,910,185,950,200,990,238,1040,205,1080,240,1125,222,1150,243,1200,240,1240,255,1280,265,1340,220,1380,215,1415,187,1450,220,1500,255], [0,255,25,265,60,265,110,242,135,240,170,180,200,152,250,133,285,133,320,180,355,235,385,247,445,230,490,180,512,165,560,182,590,148,625,145,680,120,730,120,825,227,880,165,935,130,990,132,1045,145,1070,130,1130,128,1175,210,1198,180])
const dLine = pts(680, 500, [57,145,85,140,125,155,195,145,260,155,300,150,345,133,415,128,460,150,500,155,560,185,620,210,700,215,780,240,820,240,880,218,940,203,980,210,1015,222,1060,215,1130,230,1200,238,1300,258,1380,233,1440,205,1500,233], [0,235,45,255,130,253,190,205,230,165,295,148,345,180,385,212,445,230,510,190,560,183,650,155,730,125,775,150,825,185,860,190,950,145,1040,140,1130,130,1180,165,1198,172])
const jLine = pts(680, 500, [57,122,85,125,125,208,148,133,175,150,195,138,235,175,265,165,300,138,325,100,347,90,370,125,390,115,415,118,460,218,485,185,503,145,545,255,570,258,595,275,615,255,660,265,680,210,705,195,750,292,770,292,790,262,835,215,860,210,900,140,925,142,960,200,990,283,1015,270,1038,187,1058,188,1080,275,1125,210,1147,272,1190,245,1240,280,1258,270,1280,287,1305,265,1325,210,1345,190,1390,180,1415,135,1435,160,1460,260,1480,297,1500,295], [0,292,25,303,45,295,80,260,110,245,135,238,160,120,180,80,205,68,260,90,285,110,300,160,355,323,380,323,400,280,445,240,490,120,512,112,535,155,555,170,575,115,600,105,625,122,665,85,690,85,735,110,780,240,825,308,845,215,890,110,935,85,980,130,1000,115,1045,148,1065,112,1090,125,1130,128,1178,298,1202,195])
</script>

<style>
html, body { margin: 0; background: #000; }
</style>

<style scoped>
.terminal {
  position: relative;
  width: 1414px;
  height: 845px;
  overflow: hidden;
  background: #000;
  color: #c8c8c8;
  font-family: "Liberation Sans", "Noto Sans CJK SC", sans-serif;
  font-size: 12px;
}
.sprite { position: absolute; }

/* 顶栏 */
.topbar { display: flex; height: 19px; background: #000; }
.top-left { display: flex; width: 340px; flex: none; }
.logo { width: 13px; height: 15px; margin-right: 27px; }
.nav-btn {
  display: flex;
  align-items: center;
  justify-content: center;
  height: 18px;
  background: #161616;
  border: 1px solid #2c2c2c;
  border-top: none;
  border-radius: 0 0 4px 4px;
  box-sizing: border-box;
}
.home { width: 31px; margin-right: 7px; }
.back { width: 34px; }
.fwd { width: 39px; margin-right: 6px; }
.top-btn { width: 33px; }
.menu {
  position: relative;
  width: 545px;
  flex: none;
  height: 19px;
  background: linear-gradient(#3c3c3c, #1c1c1c);
  clip-path: polygon(0 0, 100% 0, 100% 100%, 6px 100%);
  color: #ececec;
}
.menu-item { position: absolute; top: 2px; line-height: 14px; font-size: 12px; white-space: nowrap; }
.menu-item.on { color: #ff1010; }
.quick { display: flex; gap: 2px; flex: 1; background: linear-gradient(#3c3c3c, #1c1c1c); align-items: flex-start; }
.quick-btn { height: 18px; line-height: 18px; text-align: center; color: #101010; font-size: 12px; border-radius: 2px; flex: none; }
.q-orange { background: linear-gradient(#ffd080, #e89a30); }
.q-pink { background: linear-gradient(#ffb8b0, #f08078); }
.q-yellow { background: linear-gradient(#ffff80, #e4e420); }
.q-blue { background: linear-gradient(#c8e8ff, #8cc4f0); }
.q-lime { background: linear-gradient(#e8ff80, #c0e420); }
.q-fade { width: 32px; background: #6a5a5a; }

/* 工具栏 */
.toolbar { display: flex; height: 58px; background: #646464; color: #f2f2f2; font-size: 12px; }
.tb-group { display: flex; flex: none; height: 100%; background-image: linear-gradient(#8cb0cc 50%, transparent 50%); background-size: 1px 3px; background-position: right top; background-repeat: repeat-y; box-sizing: border-box; }
.g-page { width: 72px; flex-direction: column; padding: 10px 0 0 5px; gap: 8px; font-size: 14px; }
.page-item { display: flex; align-items: center; gap: 3px; height: 16px; }
.g-user { width: 100px; padding-left: 2px; }
.g-user .tool { width: 48px; }
.tool { position: relative; display: flex; flex-direction: column; align-items: center; flex: none; white-space: nowrap; }
.tool span { position: absolute; top: 41px; line-height: 14px; }
.user-ic { margin-top: 8px; }
.mark-ic { margin-top: 5px; }
.g-mark { width: 434px; padding-left: 4px; }
.tool-list { display: flex; flex-direction: column; gap: 3px; padding: 4px 0 0 4px; font-size: 12px; }
.tool-list div { display: flex; align-items: center; gap: 4px; height: 15px; white-space: nowrap; }
.g-per { width: 441px; padding-left: 5px; }
.per { width: 48px; }
.gold-ic { margin-top: 5px; }
.g-trade { width: 143px; flex-wrap: wrap; padding: 4px 0 0 7px; align-content: flex-start; row-gap: 4px; background: none; }
.trade-item { display: flex; align-items: center; gap: 3px; width: 67px; height: 14px; }
.g-margin { width: 190px; align-items: flex-end; gap: 15px; padding: 0 0 4px 0; background-position: right top; }
.g-margin span { width: 50px; text-align: center; white-space: nowrap; }
.watermark { position: absolute; left: 1192px; top: 8px; width: 222px; height: 49px; background: #f6f6f6; z-index: 2; overflow: hidden; }
.wm-top { display: flex; gap: 7px; height: 25px; align-items: center; padding-left: 5px; }
.wm-top b { color: #1018d8; font-size: 20px; }
.wm-top span { color: #222; font-family: "Noto Sans CJK SC", sans-serif; font-size: 18px; line-height: 24px; white-space: nowrap; font-weight: 500; }
.wm-url { color: #f02000; font-size: 22px; font-weight: 700; line-height: 21px; padding-left: 4px; white-space: nowrap; }

/* 主体 */
.body { display: flex; height: 762px; }
.left-wrap { width: 977px; flex: none; display: flex; flex-direction: column; }
.left-top { display: flex; height: 745px; }
.side { position: relative; width: 16px; flex: none; display: flex; flex-direction: column; }
.side-tab {
  display: flex;
  flex-direction: column;
  align-items: center;
  width: 15px;
  background: #aeaeae;
  color: #1c1c1c;
  border-bottom: 1px solid #000;
  box-sizing: border-box;
  font-size: 13px;
}
.side-tab.on { background: #800000; color: #fff; }
.side-dot { position: absolute; left: 0; top: 378px; width: 5px; height: 5px; background: #e8a020; transform: rotate(45deg); }

.center { width: 961px; flex: none; display: flex; flex-direction: column; }
.periods { display: flex; align-items: center; height: 20px; gap: 8.5px; padding-left: 4px; border-bottom: 1px solid #404040; box-sizing: border-box; font-size: 12px; letter-spacing: 0.45px; color: #d0d0d0; }
.more { color: #18e0e0; margin-left: 2px; }
.more-arrow { margin-left: 0; }
.period-actions { display: flex; margin-left: auto; height: 100%; letter-spacing: 0; }
.period-actions span { box-sizing: border-box; border-left: 1px solid #404040; text-align: center; line-height: 19px; }

.chart { position: relative; height: 692px; }
.canvas { position: absolute; left: 0; top: 0; }
.axis-label { fill: #6c6c6c; font-size: 12px; font-family: "Liberation Sans", sans-serif; }
.mark-text { fill: #b8b8b8; font-size: 12.5px; font-family: "Liberation Sans", sans-serif; }
.pane { position: relative; box-sizing: border-box; border-bottom: 1px solid #404040; }
.price { height: 299px; }
.vol { height: 93px; }
.ddx { height: 79px; }
.macd { height: 115px; }
.kdj { height: 106px; border-bottom: none; }
.legend { display: flex; gap: 6px; padding-left: 1px; height: 15px; line-height: 15px; font-size: 12px; white-space: nowrap; }
.legend i { display: inline-block; width: 5px; height: 13px; margin-left: 2px; vertical-align: -2px; }
.legend .up { background: #ff2020; clip-path: polygon(50% 0, 100% 38%, 60% 38%, 60% 100%, 40% 100%, 40% 38%, 0 38%); }
.legend .down { background: #44f0f0; clip-path: polygon(40% 0, 60% 0, 60% 62%, 100% 62%, 50% 100%, 0 62%, 40% 62%); }
.name { color: #b8b8b8; }
.w { color: #ececec; }
.y { color: #ffff00; }
.m { color: #ff00ff; }
.lg-price { gap: 0; }
.title { color: #e8e8e8; width: 123px; flex: none; }
.ma { flex: none; }
.info { gap: 4px; color: #c4c4c4; }
.info .g { color: #c4c4c4; }
.info .gr { color: #00e040; }
.info .r { color: #ff3232; }
.info .yd { color: #d8d800; }
.flag { position: absolute; top: 284px; width: 13px; height: 14px; line-height: 14px; font-size: 12px; text-align: center; color: #fff; }
.f-cai { left: 0; background: #003a78; width: 8px; overflow: hidden; text-indent: -4px; }
.f-zhang { left: 25px; background: #8a0000; }
.f-jian { left: 840px; background: #007a10; }
.tiny-icons { position: absolute; left: 886px; top: 2px; color: #555; font-size: 11px; }
.x10 { position: absolute; left: 912px; top: 76px; width: 24px; height: 14px; line-height: 13px; border: 1px solid #404040; box-sizing: border-box; text-align: center; color: #666; font-size: 11px; }
.kdj-box { position: absolute; left: 910px; top: 0; width: 51px; height: 106px; border: 2px solid #404040; box-sizing: border-box; border-bottom-width: 1px; }

.timeaxis { position: relative; height: 17px; border-top: 1px solid #404040; border-bottom: 1px solid #404040; box-sizing: border-box; }
.date { position: absolute; left: 1px; top: 0; width: 77px; height: 15px; line-height: 15px; background: #00008c; color: #d8d8d8; text-align: center; font-size: 12px; }
.month { position: absolute; top: 0; height: 15px; line-height: 16px; padding-left: 2px; border-left: 1px solid #404040; color: #6c6c6c; }
.axis-mode { position: absolute; left: 911px; top: 0; width: 50px; height: 15px; line-height: 15px; border-left: 1px solid #404040; box-sizing: border-box; text-align: center; color: #ccc; font-size: 13px; }
.ind-tabs { display: flex; height: 16px; padding-left: 1px; box-sizing: border-box; line-height: 16px; font-size: 12px; }
.ind-tabs > span { flex: none; text-align: center; border-right: 1px solid #404040; box-sizing: border-box; color: #ccc; }
.tab-on { background: #303030; }
.ind-tabs > .tab-cy { color: #18e0e0; }
.zoom-btns { margin-left: auto; display: flex; width: 50px; }
.zoom-btns span { flex: 1; text-align: center; border-left: 1px solid #404040; color: #ccc; }

/* 关联 */
.relate { width: 211px; flex: none; display: flex; flex-direction: column; border-left: 1px solid #404040; box-sizing: border-box; }
.rel-top { position: relative; height: 381px; }
.rel-head { height: 22px; line-height: 21px; padding-left: 34px; font-size: 14px; color: #c8c8c8; }
.rel-row { display: flex; align-items: center; height: 22px; }
.rel-row em { width: 35px; padding-left: 15px; box-sizing: border-box; font-style: normal; color: #e0e0e0; font-size: 12px; }
.rel-row b { font-weight: 400; color: #ffff00; font-size: 16px; }
.rel-row small { color: #b0b0b0; font-size: 12px; margin-left: 6px; }
.scroll { position: absolute; right: 0; top: 0; bottom: 0; width: 12px; border-left: 1px solid #303030; text-align: center; padding-top: 5px; box-sizing: border-box; }
.rel-tabs { position: relative; display: flex; align-items: center; height: 19px; padding-left: 1px; }
.rt-on, .rt-off { display: inline-block; height: 16px; line-height: 16px; font-size: 13px; font-weight: 700; text-align: center; flex: none; }
.rt-on { width: 70px; margin-left: 2px; background: #8a0000; color: #fff; clip-path: polygon(5px 0, 100% 0, calc(100% - 5px) 100%, 0 100%); }
.rt-off { width: 66px; margin-left: -3px; background: #8a8a8a; color: #1c1c1c; clip-path: polygon(5px 0, 100% 0, calc(100% - 5px) 100%, 0 100%); }
.rt-drop { position: absolute; right: 1px; top: 1px; width: 12px; height: 14px; border: 1px solid #444; box-sizing: border-box; display: flex; align-items: center; justify-content: center; }
.rel-filter { display: flex; gap: 4px; height: 18px; line-height: 18px; border-bottom: 1px solid #404040; box-sizing: border-box; font-size: 12px; color: #ccc; }
.rel-filter .on { color: #18e0e0; }
.rel-list { flex: 1; padding-top: 1px; box-sizing: border-box; }
.tape-row { display: flex; height: 16px; line-height: 16px; font-size: 11px; white-space: nowrap; }
.tape-row.red { color: #ff3232; }
.tape-row.green { color: #00d84a; }
.t { width: 35px; flex: none; letter-spacing: 0.4px; }
.n { width: 54px; flex: none; font-size: 12px; }
.a { width: 53px; flex: none; font-size: 12px; }
.v { letter-spacing: 0.4px; }
.bottom-tabs { display: flex; height: 17px; line-height: 17px; text-align: center; font-size: 13px; color: #ccc; border-top: 1px solid #404040; box-sizing: border-box; flex: none; }
.bottom-tabs span { border-right: 1px solid #404040; box-sizing: border-box; flex: 1; }
.bottom-tabs .on { color: #18e0e0; }

/* 盘口 */
.quote { flex: 1; display: flex; flex-direction: column; color: #c8c8c8; border-left: 1px solid #404040; margin-left: -1px; }
.q-title { position: relative; height: 28px; line-height: 28px; text-align: center; color: #ffff00; font-size: 16px; border-bottom: 1px solid #404040; box-sizing: border-box; }
.q-title b { font-size: 14px; }
.close { position: absolute; right: 4px; top: -4px; color: #888; font-size: 12px; }
.lb { font-size: 16px; color: #c8c8c8; line-height: 19px; font-weight: 400; }
.rv { color: #ff3232; font-weight: 700; font-size: 14px; }
.gv { color: #00d84a; font-weight: 700; font-size: 14px; }
.yv { color: #c8c800; font-weight: 700; font-size: 14px; }
.mv { color: #ff00ff; font-weight: 700; font-size: 14px; }
.wv { color: #b8b8b8; font-weight: 700; font-size: 14px; }
.q-ratio { display: flex; align-items: center; height: 20px; padding: 0 3px; border-bottom: 1px solid #404040; box-sizing: border-box; }
.q-ratio .rv { margin-left: 21px; }
.q-ratio .lb2 { margin-left: 4px; }
.q-ratio .end { margin-left: auto; }
.q-book { height: 97px; border-bottom: 1px solid #404040; box-sizing: border-box; padding: 1px 3px 0; }
.q-level { display: flex; align-items: center; height: 19px; }
.price-cell { margin-left: 49px; }
.q-level .yv { margin-left: auto; }
.q-stats { display: grid; grid-template-columns: 109px 110px; padding: 1px 0 0 3px; border-bottom: 1px solid #404040; box-sizing: border-box; }
.s1 { height: 97px; }
.s2 { height: 60px; }
.stat { display: flex; justify-content: space-between; align-items: center; height: 19px; padding-right: 3px; }
.boxed { border: 1px solid #ff3232; height: 15px; line-height: 14px; box-sizing: border-box; padding: 0 1px; }
.q-flow { height: 77px; border-bottom: 1px solid #404040; box-sizing: border-box; padding: 0 3px; }
.flow-row { position: relative; display: flex; align-items: center; height: 19px; }
.flow-lb { white-space: nowrap; }
.flow-bar { position: absolute; left: 91px; top: 6px; display: block; height: 8px; }
.flow-bar i { display: block; height: 8px; }
.flow-val { position: absolute; right: 34px; }
.flow-val.wide { right: 41px; }
.flow-pct { position: absolute; right: 0; }
.trades { flex: 1; padding-top: 1px; }
.trade-group { border-bottom: 1px solid #404040; }
.trade-group + .trade-group { margin-top: -1px; }
.trade-group:last-child { border-bottom: none; }
.trade-row { display: flex; align-items: center; height: 18px; padding: 0 3px; }
.tt { width: 60px; font-weight: 700; font-size: 14px; color: #c8c8c8; }
.tp { width: 44px; text-align: right; }
.tv { width: 62px; text-align: right; }
.ts { width: 33px; text-align: center; padding-left: 2px; box-sizing: border-box; }
.tc { flex: 1; text-align: right; font-weight: 700; font-size: 14px; color: #a8a8a8; }

.ext-tabs { display: flex; height: 17px; line-height: 17px; font-size: 12px; border-top: 1px solid #404040; box-sizing: border-box; flex: none; }
.ext-tabs span { flex: none; text-align: center; box-sizing: border-box; border-right: 1px solid #404040; color: #ccc; white-space: nowrap; overflow: hidden; }
.ext-tabs .hot { color: #d8d800; }
.status { position: relative; height: 6px; background: #242424; }
.st-flag { position: absolute; left: 0; top: 1px; width: 13px; height: 5px; background: #e8a020; }
.st-box { position: absolute; top: 0; width: 49px; height: 6px; background: linear-gradient(90deg, #f0f0f0 20%, #f02020 20% 55%, #10a030 55% 75%, #f0f0f0 75%); }
.st-a { left: 663px; }
.st-b { left: 714px; }
.st-tray { position: absolute; left: 1335px; top: 2px; width: 57px; height: 4px; background: linear-gradient(90deg, #4878c0 0 13px, transparent 13px 18px, #f0f0f0 18px 31px, transparent 31px 40px, #a8a020 40px 48px, transparent 48px); }
</style>
